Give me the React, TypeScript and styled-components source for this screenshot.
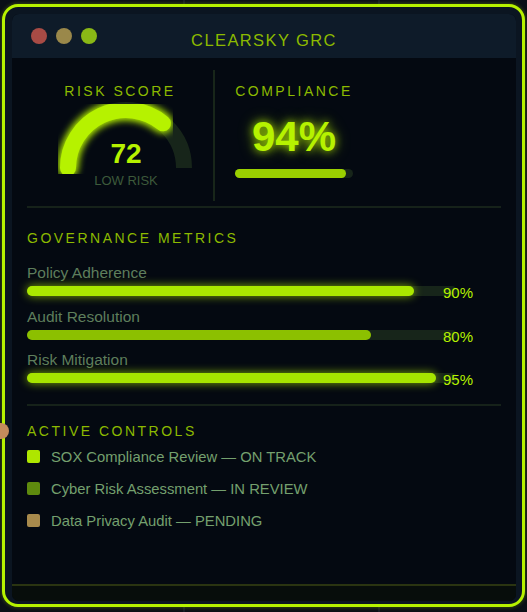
import { FC } from "react";
import styled, { createGlobalStyle } from "styled-components";

const GlobalStyle = createGlobalStyle`
  html, body {
    margin: 0;
    padding: 0;
    background-color: #0a0f17;
    background-image:
      linear-gradient(90deg, transparent 183px, #151c26 183px, #151c26 185px, transparent 185px),
      linear-gradient(90deg, transparent 378px, #151c26 378px, #151c26 380px, transparent 380px);
    font-family: "Liberation Sans", Arial, sans-serif;
  }
  #root {
    padding: 4px 2px 0 2px;
    height: 612px;
    box-sizing: border-box;
  }
`;

const LIME = "#b6f200";
const OLIVE = "#8cba00";

const Frame = styled.div`
  position: relative;
  box-sizing: border-box;
  height: 603px;
  border: 3px solid ${LIME};
  border-radius: 16px;
  background: #0b1521;
  padding: 7px 6px 3px 7px;
  box-shadow: 0 0 4px rgba(182, 242, 0, 0.35);
`;

const EdgeDot = styled.div`
  position: absolute;
  left: -12px;
  top: 416px;
  width: 16px;
  height: 16px;
  border-radius: 50%;
  background: #c48c5c;
`;

const Window = styled.div`
  height: 100%;
  display: flex;
  flex-direction: column;
  background: #040911;
  border-radius: 7px;
  overflow: hidden;
`;

const TitleBar = styled.div`
  flex: 0 0 44px;
  display: grid;
  grid-template-columns: 1fr auto 1fr;
  align-items: center;
  background: #0e1b29;
  padding: 0 19px;
`;

const Lights = styled.div`
  display: flex;
  gap: 9px;
`;

const Light = styled.span<{ $color: string }>`
  width: 16px;
  height: 16px;
  border-radius: 50%;
  background: ${(p) => p.$color};
`;

const Title = styled.div`
  padding-top: 8px;
  font-size: 16.5px;
  letter-spacing: 1.4px;
  color: ${OLIVE};
`;

const Body = styled.div`
  flex: 1 1 auto;
  padding: 12px 15px 0;
`;

const TopRow = styled.div`
  display: grid;
  grid-template-columns: 188px 1fr;
  padding-bottom: 5px;
  border-bottom: 2px solid #16221a;
`;

const ScoreColumn = styled.div`
  height: 131px;
  display: flex;
  flex-direction: column;
  align-items: center;
  padding-top: 12px;
  box-sizing: border-box;
  border-right: 2px solid #18261a;
`;

const ComplianceColumn = styled.div`
  padding: 12px 0 0 20px;
  display: flex;
  flex-direction: column;
  align-items: flex-start;
`;

const ComplianceStack = styled.div`
  display: flex;
  flex-direction: column;
  align-items: center;
`;

const CardLabel = styled.div`
  font-size: 14px;
  line-height: 18px;
  letter-spacing: 2.5px;
  color: ${OLIVE};
`;

const Gauge = styled.div`
  position: relative;
  width: 140px;
  height: 90px;
  margin-left: 12px;
`;

const GaugeValue = styled.div`
  position: absolute;
  left: 0;
  right: 0;
  top: 38px;
  text-align: center;
  font-size: 28px;
  line-height: 32px;
  font-weight: 700;
  color: ${LIME};
`;

const GaugeCaption = styled.div`
  position: absolute;
  left: 0;
  right: 0;
  top: 73px;
  text-align: center;
  font-size: 13px;
  line-height: 16px;
  color: #3d5a3b;
`;

const BigPercent = styled.div`
  margin-top: 13px;
  font-size: 42px;
  line-height: 48px;
  font-weight: 700;
  color: ${LIME};
  text-shadow: 0 0 8px rgba(182, 242, 0, 0.85), 0 0 16px rgba(182, 242, 0, 0.45);
`;

const Track = styled.div<{ $width?: number; $height: number }>`
  position: relative;
  width: ${(p) => (p.$width ? `${p.$width}px` : "100%")};
  height: ${(p) => p.$height}px;
  border-radius: ${(p) => p.$height / 2}px;
  background: #17251a;
`;

const Fill = styled.div<{ $color: string; $glow?: boolean }>`
  height: 100%;
  border-radius: inherit;
  background: ${(p) => p.$color};
  box-shadow: ${(p) => (p.$glow ? "0 0 10px rgba(182, 242, 0, 0.7)" : "none")};
`;

const ComplianceBar = styled.div`
  margin-top: 8px;
`;

const SectionHeading = styled.div<{ $gap: number }>`
  margin-top: ${(p) => p.$gap}px;
  font-size: 14px;
  line-height: 18px;
  letter-spacing: 2.5px;
  color: ${OLIVE};
`;

const Metrics = styled.div`
  margin-top: 17px;
  display: flex;
  flex-direction: column;
  gap: 7.5px;
  padding-bottom: 17px;
  border-bottom: 2px solid #16221a;
`;

const MetricLabel = styled.div`
  font-size: 15.5px;
  line-height: 18px;
  color: #5e7e5c;
`;

const BarRow = styled.div`
  height: 18px;
  display: flex;
  align-items: center;
`;

const MetricPercent = styled.span`
  margin: 3px 0 0 -14px;
  font-size: 15px;
  color: ${LIME};
  position: relative;
`;

const Controls = styled.ul`
  margin: 6px 0 0;
  padding: 0;
  list-style: none;
  display: flex;
  flex-direction: column;
  gap: 10px;
`;

const ControlItem = styled.li`
  height: 22px;
  display: flex;
  align-items: center;
  gap: 11px;
  font-size: 14.8px;
  color: #74a06e;
`;

const StatusSquare = styled.span<{ $color: string }>`
  width: 13px;
  height: 13px;
  border-radius: 2px;
  background: ${(p) => p.$color};
  margin-top: -2px;
`;

const Footer = styled.div`
  flex: 0 0 15px;
  border-top: 2px solid #2a3411;
  background: #070d0b;
`;

const metrics = [
  { label: "Policy Adherence", value: 90, color: "#aae800", glow: true },
  { label: "Audit Resolution", value: 80, color: "#8cc000", glow: false },
  { label: "Risk Mitigation", value: 95, color: "#a6e400", glow: true },
];

const controls = [
  { label: "SOX Compliance Review — ON TRACK", color: "#aee600" },
  { label: "Cyber Risk Assessment — IN REVIEW", color: "#5e8a0e" },
  { label: "Data Privacy Audit — PENDING", color: "#a88a4c" },
];

// semicircle gauge, center (70,68), radius 58
const arcPoint = (pct: number) => {
  const a = Math.PI - (pct / 100) * Math.PI;
  return { x: 70 + 58 * Math.cos(a), y: 68 - 58 * Math.sin(a) };
};

const RiskGauge: FC<{ value: number; caption: string }> = ({ value, caption }) => {
  const end = arcPoint(value);

  return (
    <Gauge>
      <svg width="140" height="80" viewBox="0 0 140 80">
        <defs>
          <filter id="gaugeGlow">
            <feGaussianBlur stdDeviation="4.5" result="blur" />
            <feMerge>
              <feMergeNode in="blur" />
              <feMergeNode in="blur" />
              <feMergeNode in="SourceGraphic" />
            </feMerge>
          </filter>
        </defs>
        <path d="M 12 68 A 58 58 0 0 1 128 68" fill="none" stroke="#17251a" strokeWidth="16" />
        <path
          d={`M 12 68 A 58 58 0 0 1 ${end.x.toFixed(2)} ${end.y.toFixed(2)}`}
          fill="none"
          stroke={LIME}
          strokeWidth="16"
          strokeLinecap="round"
          filter="url(#gaugeGlow)"
        />
      </svg>
      <GaugeValue>{value}</GaugeValue>
      <GaugeCaption>{caption}</GaugeCaption>
    </Gauge>
  );
};

const App: FC = () => {
  return (
    <>
      <GlobalStyle />
      <Frame>
        <EdgeDot />
        <Window>
          <TitleBar>
            <Lights>
              <Light $color="#a84b45" />
              <Light $color="#9a884a" />
              <Light $color="#8ab816" />
            </Lights>
            <Title>CLEARSKY GRC</Title>
            <span />
          </TitleBar>
          <Body>
            <TopRow>
              <ScoreColumn>
                <CardLabel>RISK SCORE</CardLabel>
                <RiskGauge value={72} caption="LOW RISK" />
              </ScoreColumn>
              <ComplianceColumn>
                <ComplianceStack>
                  <CardLabel>COMPLIANCE</CardLabel>
                  <BigPercent>94%</BigPercent>
                  <ComplianceBar>
                    <Track $width={118} $height={9}>
                      <Fill $color="#9ad000" style={{ width: "94%" }} />
                    </Track>
                  </ComplianceBar>
                </ComplianceStack>
              </ComplianceColumn>
            </TopRow>

            <SectionHeading $gap={21}>GOVERNANCE METRICS</SectionHeading>
            <Metrics>
              {metrics.map((m) => (
                <div key={m.label}>
                  <MetricLabel>{m.label}</MetricLabel>
                  <BarRow>
                    <Track $width={430} $height={10}>
                      <Fill $color={m.color} $glow={m.glow} style={{ width: `${m.value}%` }} />
                    </Track>
                    <MetricPercent>{m.value}%</MetricPercent>
                  </BarRow>
                </div>
              ))}
            </Metrics>

            <SectionHeading $gap={16}>ACTIVE CONTROLS</SectionHeading>
            <Controls>
              {controls.map((c) => (
                <ControlItem key={c.label}>
                  <StatusSquare $color={c.color} />
                  {c.label}
                </ControlItem>
              ))}
            </Controls>
          </Body>
          <Footer />
        </Window>
      </Frame>
    </>
  );
};

export default App;
